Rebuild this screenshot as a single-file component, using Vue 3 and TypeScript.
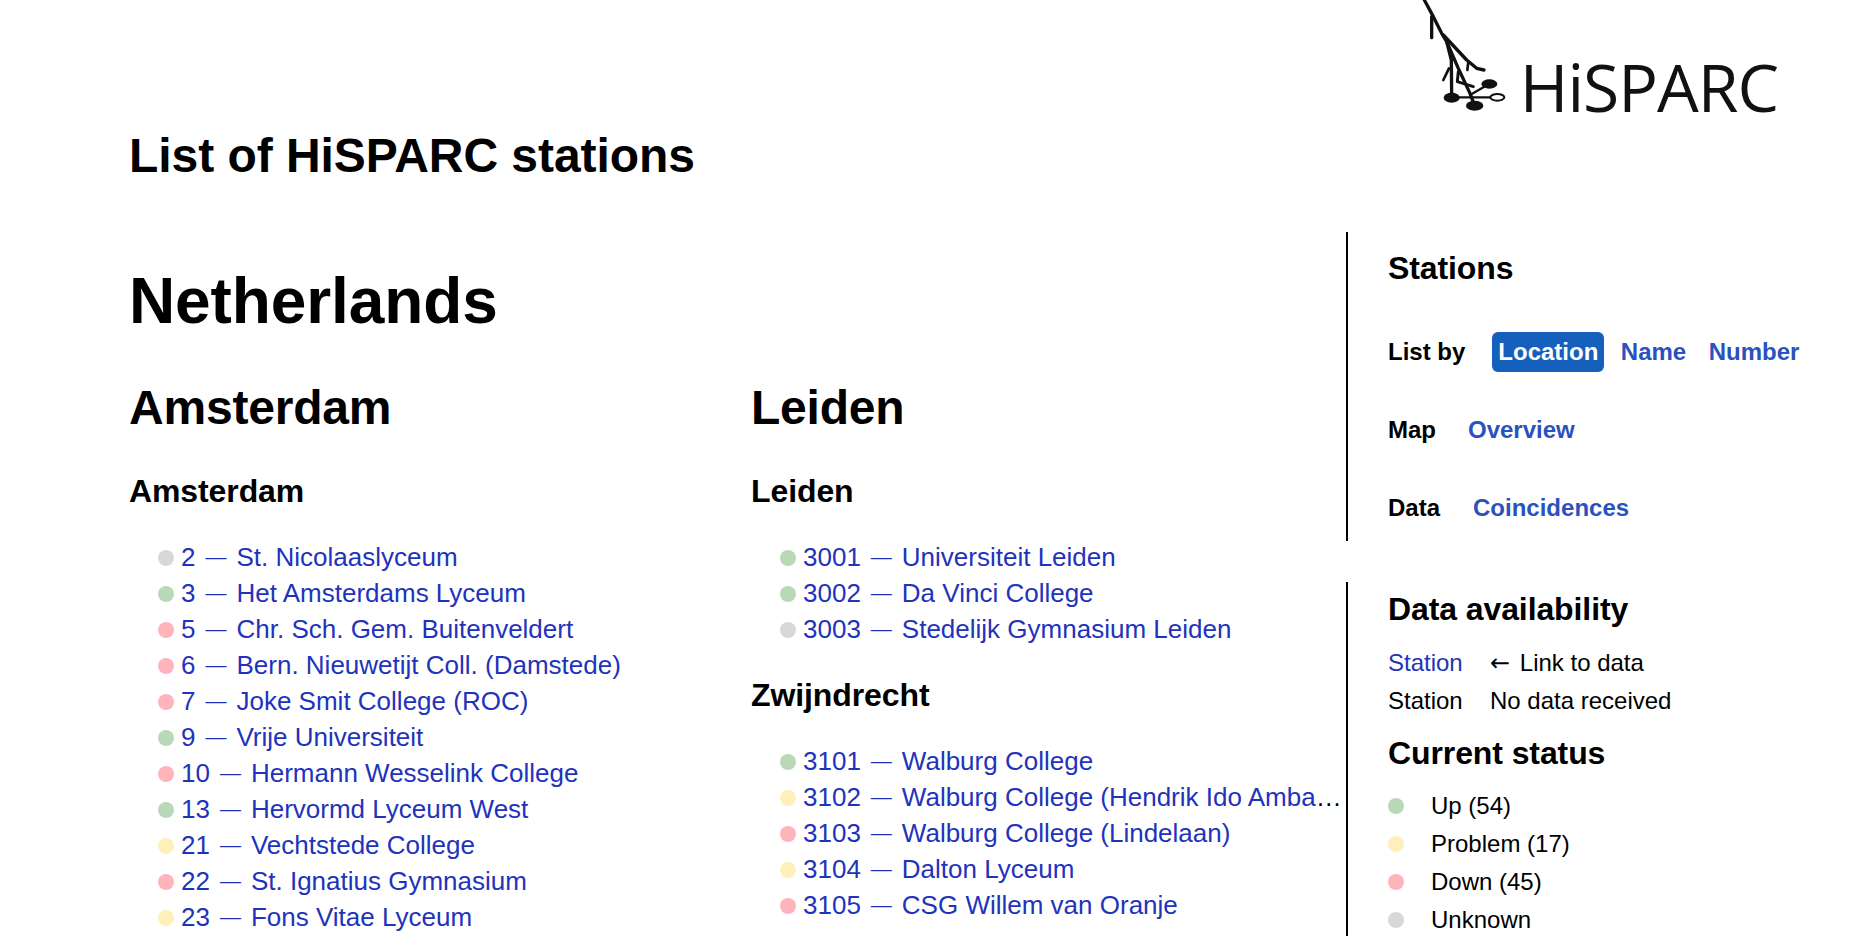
<script setup lang="ts">
type Status = 'up' | 'problem' | 'down' | 'unknown';

interface Station {
  number: number;
  name: string;
  status: Status;
}

interface City {
  name: string;
  stations: Station[];
}

const columns: City[][] = [
  [
    {
      name: 'Amsterdam',
      stations: [
        { number: 2, name: 'St. Nicolaaslyceum', status: 'unknown' },
        { number: 3, name: 'Het Amsterdams Lyceum', status: 'up' },
        { number: 5, name: 'Chr. Sch. Gem. Buitenveldert', status: 'down' },
        { number: 6, name: 'Bern. Nieuwetijt Coll. (Damstede)', status: 'down' },
        { number: 7, name: 'Joke Smit College (ROC)', status: 'down' },
        { number: 9, name: 'Vrije Universiteit', status: 'up' },
        { number: 10, name: 'Hermann Wesselink College', status: 'down' },
        { number: 13, name: 'Hervormd Lyceum West', status: 'up' },
        { number: 21, name: 'Vechtstede College', status: 'problem' },
        { number: 22, name: 'St. Ignatius Gymnasium', status: 'down' },
        { number: 23, name: 'Fons Vitae Lyceum', status: 'problem' },
      ],
    },
  ],
  [
    {
      name: 'Leiden',
      stations: [
        { number: 3001, name: 'Universiteit Leiden', status: 'up' },
        { number: 3002, name: 'Da Vinci College', status: 'up' },
        { number: 3003, name: 'Stedelijk Gymnasium Leiden', status: 'unknown' },
      ],
    },
    {
      name: 'Zwijndrecht',
      stations: [
        { number: 3101, name: 'Walburg College', status: 'up' },
        { number: 3102, name: 'Walburg College (Hendrik Ido Ambacht)', status: 'problem' },
        { number: 3103, name: 'Walburg College (Lindelaan)', status: 'down' },
        { number: 3104, name: 'Dalton Lyceum', status: 'problem' },
        { number: 3105, name: 'CSG Willem van Oranje', status: 'down' },
      ],
    },
  ],
];

const legend: { label: string; status: Status }[] = [
  { label: 'Up (54)', status: 'up' },
  { label: 'Problem (17)', status: 'problem' },
  { label: 'Down (45)', status: 'down' },
  { label: 'Unknown', status: 'unknown' },
];
</script>

<template>
  <div class="page">
    <header class="top">
      <div class="logo">
        <svg class="tree" width="130" height="115" viewBox="0 0 390 345">
          <g fill="none" stroke="#111" stroke-linecap="round" stroke-linejoin="round">
            <path stroke-width="10" d="M133 0 L160 50 L185 100 L200 125" />
            <path stroke-width="10" d="M155 50 V113" />
            <path stroke-width="10" d="M190 105 L260 180 L290 205 L312 210" />
            <path stroke-width="8" d="M265 185 L262 210" />
            <path stroke-width="10" d="M200 125 L214 180 L215 290" />
            <path stroke-width="10" d="M200 125 L235 205 L270 280 L282 312" />
            <path stroke-width="8" d="M207 205 L190 240" />
            <path stroke-width="9" d="M235 215 L232 245 L280 260" />
            <path stroke-width="7" d="M215 292 H332" />
            <path stroke-width="7" d="M270 285 L322 255" />
          </g>
          <ellipse cx="328" cy="252" rx="24" ry="14" fill="#111" />
          <ellipse cx="215" cy="293" rx="24" ry="15" fill="#111" />
          <ellipse cx="284" cy="317" rx="26" ry="15" fill="#111" />
          <ellipse cx="352" cy="292" rx="21" ry="10" fill="#fff" stroke="#111" stroke-width="6" />
        </svg>
        <span class="wordmark">HiSPARC</span>
      </div>
      <h1>List of HiSPARC stations</h1>
    </header>

    <div class="layout">
      <main class="content">
        <h2>Netherlands</h2>
        <div class="columns">
          <div v-for="(column, i) in columns" :key="i" class="column">
            <h3>{{ column[0].name }}</h3>
            <section v-for="city in column" :key="city.name">
              <h4>{{ city.name }}</h4>
              <ul>
                <li v-for="station in city.stations" :key="station.number">
                  <i class="dot" :class="station.status"></i>
                  <a href="#">{{ station.number }}<span class="sep">—</span>{{ station.name }}</a>
                </li>
              </ul>
            </section>
          </div>
        </div>
      </main>

      <aside class="sidebar">
        <nav class="panel panel-nav">
          <h4>Stations</h4>
          <div class="nav-rows">
            <div class="nav-row">
              <b>List by</b>
              <div class="nav-links">
                <a href="#" class="active">Location</a>
                <a href="#">Name</a>
                <a href="#">Number</a>
              </div>
            </div>
            <div class="nav-row">
              <b>Map</b>
              <div class="nav-links nav-links-map"><a href="#">Overview</a></div>
            </div>
            <div class="nav-row">
              <b>Data</b>
              <div class="nav-links nav-links-data"><a href="#">Coincidences</a></div>
            </div>
          </div>
        </nav>

        <div class="panel panel-info">
          <h4>Data availability</h4>
          <div class="availability">
            <a href="#">Station</a><span><span class="arrow">←</span> Link to data</span>
            <span>Station</span><span>No data received</span>
          </div>
          <h4 class="status-title">Current status</h4>
          <ul class="legend">
            <li v-for="item in legend" :key="item.label">
              <i class="dot" :class="item.status"></i>{{ item.label }}
            </li>
          </ul>
        </div>
      </aside>
    </div>
  </div>
</template>

<style>
html,
body {
  margin: 0;
  background: #fff;
  overflow: hidden;
}
</style>

<style scoped>
.page {
  height: 936px;
  overflow: hidden;
  color: #000;
  font-family: "Liberation Sans", Arial, sans-serif;
  font-size: 24px;
  line-height: 36px;
}
h1,
h2,
h3,
h4 {
  margin: 0;
  font-weight: 700;
}
ul {
  margin: 0;
  padding: 0;
  list-style: none;
}
a {
  color: #2233bb;
  text-decoration: none;
}
.top {
  height: 232px;
  padding-left: 129px;
  box-sizing: border-box;
}
.logo {
  display: flex;
  justify-content: flex-end;
  align-items: flex-start;
  height: 126px;
  padding-right: 76px;
}
.tree {
  margin-right: 10px;
}
.wordmark {
  margin-top: 48px;
  font-family: "Open Sans", sans-serif;
  font-weight: 400;
  font-size: 66px;
  line-height: 76px;
  letter-spacing: -1px;
  color: #111;
}
h1 {
  font-size: 48px;
  line-height: 60px;
  letter-spacing: -0.05px;
}
.layout {
  display: flex;
}
.content {
  width: 1346px;
  flex-shrink: 0;
  box-sizing: border-box;
  padding: 37px 0 0 129px;
}
h2 {
  font-size: 64px;
  line-height: 64px;
  letter-spacing: -0.1px;
}
.columns {
  display: grid;
  grid-template-columns: 622px 1fr;
  margin-top: 51px;
}
.column {
  min-width: 0;
}
h3 {
  font-size: 48px;
  line-height: 48px;
  letter-spacing: -0.2px;
  margin-bottom: 41px;
}
h4 {
  font-size: 32px;
  line-height: 36px;
  letter-spacing: -0.1px;
}
section ul {
  margin: 30px 0;
  padding-left: 29px;
}
section li {
  display: block;
  height: 36px;
  font-size: 26px;
  white-space: nowrap;
  overflow: hidden;
  text-overflow: ellipsis;
}
.dot {
  display: inline-block;
  width: 16px;
  height: 16px;
  margin-right: 7px;
  border-radius: 50%;
  vertical-align: 0;
}
.dot.up {
  background: #b8d8b8;
}
.dot.problem {
  background: #fff0bb;
}
.dot.down {
  background: #ffb3ba;
}
.dot.unknown {
  background: #d8d8d8;
}
.sep {
  margin: 0 10px;
  font-size: 21px;
  vertical-align: 2px;
}
.sidebar {
  flex: 1;
}
.panel {
  border-left: 2px solid #000;
  padding-left: 40px;
}
.panel-nav {
  height: 309px;
  box-sizing: border-box;
  padding-top: 18px;
  margin-bottom: 41px;
}
.nav-rows {
  display: flex;
  flex-direction: column;
  gap: 38px;
  margin-top: 46px;
}
.nav-row {
  display: flex;
  align-items: center;
  height: 40px;
}
.nav-links {
  display: flex;
  align-items: center;
  margin-left: 27px;
  font-weight: 700;
}
.nav-links a {
  color: #2a52be;
  padding: 0 6px;
  line-height: 40px;
  border-radius: 6px;
}
.nav-links a + a {
  margin-left: 10.5px;
}
.nav-links-map {
  margin-left: 26px;
}
.nav-links-data {
  margin-left: 27px;
}
.nav-links a.active {
  background: #1560bd;
  color: #fff;
}
.panel-info {
  padding-top: 9px;
}
.availability {
  display: grid;
  grid-template-columns: 102px 1fr;
  margin-top: 17px;
  line-height: 38px;
}
.arrow {
  margin-right: 3px;
  font-family: "DejaVu Sans", sans-serif;
}
.status-title {
  margin-top: 15px;
}
.legend {
  margin-top: 16px;
  line-height: 38px;
}
.legend .dot {
  margin-right: 27px;
}
</style>
